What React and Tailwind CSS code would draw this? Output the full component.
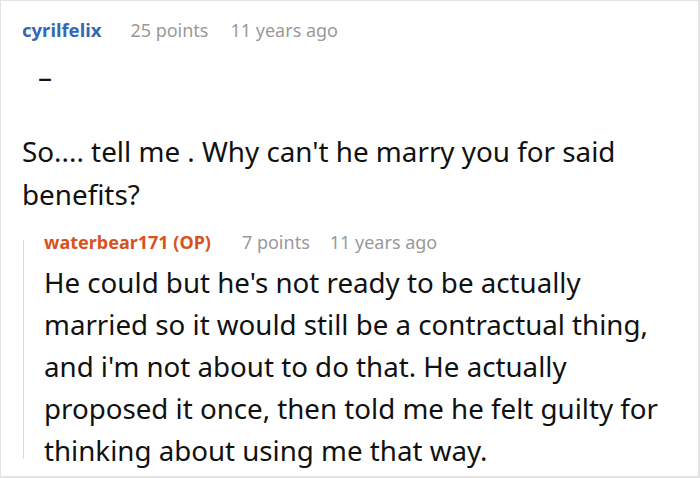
import React from 'react';

function Meta({ name, nameClass, points, age, gap, gap2 }) {
  return (
    <div className="flex items-baseline text-[18px]">
      <span className={nameClass}>{name}</span>
      <span className={`text-[#999999] ${gap}`}>{points}</span>
      <span className={`text-[#999999] ${gap2}`}>{age}</span>
    </div>
  );
}

export default function App() {
  return (
    <div
      className="w-[700px] h-[478px] bg-white border-t border-l border-r-2 border-b-2 border-[#e3e3e3] overflow-hidden"
      style={{ fontFamily: '"Noto Sans", "Open Sans", sans-serif' }}
    >
      {/* parent comment */}
      <div className="pl-[21px] pt-[15px]">
        <div className="leading-[28px]">
          <Meta
            name="cyrilfelix"
            nameClass="font-bold text-[#3467b6] text-[18.5px]"
            points="25 points"
            age="11 years ago"
            gap="ml-[29px]"
            gap2="ml-[22px]"
          />
        </div>
        <p className="text-[28px] leading-[43px] text-[#111] mt-[11px] pl-[16px]">–</p>
        <p className="text-[27.8px] leading-[43px] text-[#111] mt-[32px] w-[640px]">
          So.... tell me . Why can't he marry you for said benefits?
        </p>
      </div>

      {/* reply */}
      <div className="relative ml-[22px] mt-[13px] pl-[21px] before:absolute before:left-0 before:top-[11px] before:bottom-[12px] before:w-px before:bg-[#dcdcdc]">
        <div className="leading-[26px]">
          <Meta
            name="waterbear171 (OP)"
            nameClass="font-bold text-[#d65320]"
            points="7 points"
            age="11 years ago"
            gap="ml-[31px]"
            gap2="ml-[20px]"
          />
        </div>
        <p className="text-[27.7px] leading-[42px] text-[#111] w-[630px] mt-[6px]">
          He could but he's not ready to be actually married so it would still be a contractual thing,
          and i'm not about to do that. He actually proposed it once, then told me he felt guilty for
          thinking about using me that way.
        </p>
      </div>
    </div>
  );
}
